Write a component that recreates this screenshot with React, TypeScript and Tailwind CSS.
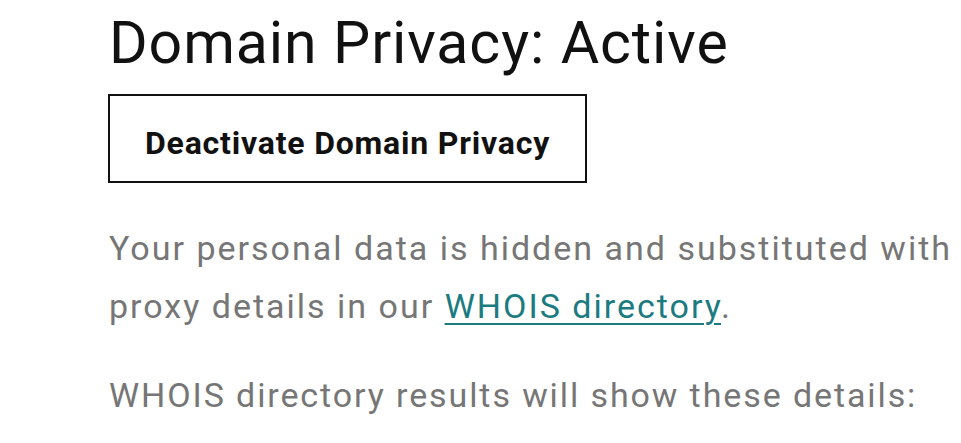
import React from "react";

const App: React.FC = () => {
  return (
    <div className="min-h-screen bg-white font-['Roboto',sans-serif]">
      <div className="pl-[109px] pt-[13px]">
        {/* Title */}
        <h1 className="text-[59px] leading-none font-normal text-[#111111] tracking-[0.9px]">
          Domain Privacy: Active
        </h1>

        {/* Action */}
        <button className="mt-[22px] -ml-[1px] flex h-[89px] items-center border-2 border-[#111111] bg-white px-[35px] pt-[8px] text-[32px] leading-none font-bold tracking-[0.8px] text-[#111111]">
          Deactivate Domain Privacy
        </button>

        {/* Description */}
        <p className="mt-[36px] w-[850px] text-[34px] leading-[58px] tracking-[2px] text-[#767676]">
          Your personal data is hidden and substituted with proxy details in
          our{" "}
          <a
            href="#"
            className="text-[#1b7b80] underline decoration-2 underline-offset-[5px]"
          >
            WHOIS directory
          </a>
          .
        </p>
        <p className="mt-[31px] text-[34px] leading-[58px] tracking-[1.9px] text-[#767676]">
          WHOIS directory results will show these details:
        </p>
      </div>
    </div>
  );
};

export default App;
